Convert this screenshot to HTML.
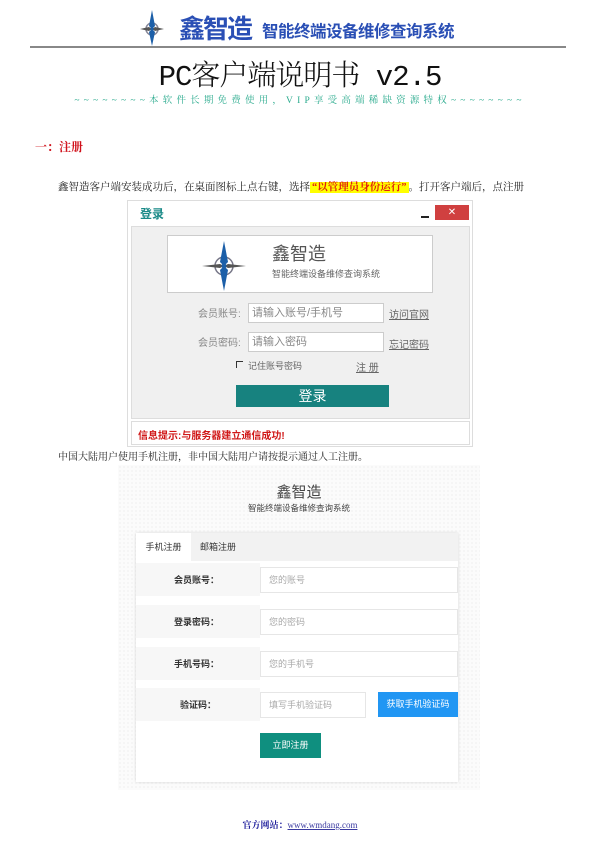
<!DOCTYPE html>
<html><head><meta charset="utf-8"><style>
*{margin:0;padding:0;box-sizing:border-box}
body{width:600px;height:850px;background:#fff;position:relative;overflow:hidden;font-family:"Liberation Serif","Noto Serif CJK SC",serif;color:#222}
.a{position:absolute;white-space:nowrap}
.s{font-family:"Liberation Sans","Noto Sans CJK SC",sans-serif}
.inp{position:absolute;background:#fff;border:1px solid #ccc;font-size:11px;color:#888;padding-left:3px;line-height:18px}
.rinp{position:absolute;background:#fff;border:1px solid #e6e6e6;font-size:9px;color:#aaa;padding-left:8px;line-height:24px}
.lab{position:absolute;font-size:9px;font-weight:bold;color:#333}
</style></head><body>
<svg class="a" style="left:140px;top:10px" width="24" height="36" viewBox="0 0 24 36">
<circle cx="12" cy="19" r="6" fill="none" stroke="#889" stroke-width="1.5"/>
<path d="M12 0 L15 16 L12 19 L9 16Z" fill="#1c5fa8"/><path d="M12 36 L15 22 L12 19 L9 22Z" fill="#1c5fa8"/>
<path d="M0 19 L9 17 L12 19 L9 21Z" fill="#555"/><path d="M24 19 L15 17 L12 19 L15 21Z" fill="#555"/>
<circle cx="12" cy="19" r="1.6" fill="#1c5fa8"/></svg>
<div class="a s" style="left:179px;top:13px;font-size:26px;font-weight:bold;color:#2a4fb5;letter-spacing:-2px;line-height:32px">鑫智造</div>
<div class="a s" style="left:262px;top:22px;font-size:16.5px;font-weight:bold;color:#2a4fb5;line-height:20px;letter-spacing:-0.5px">智能终端设备维修查询系统</div>
<div class="a" style="left:30px;top:46px;width:536px;height:2px;background:#888"></div>
<div class="a" style="left:0;width:600px;text-align:center;top:55px;font-size:29px;line-height:38px;color:#111;font-family:'Liberation Mono','Noto Serif CJK SC',serif;letter-spacing:-1px">PC<span style="font-family:'Noto Serif CJK SC',serif;font-weight:300">客户端说明书</span> v2.5</div>
<div class="a" style="left:0;width:600px;text-align:center;top:94px;font-size:9.5px;color:#2bab8e;letter-spacing:4.2px;line-height:14px">~~~~~~~~本软件长期免费使用，VIP享受高端稀缺资源特权~~~~~~~~</div>
<div class="a" style="left:35px;top:138px;font-size:12px;font-weight:bold;color:#d0101a">一：注册</div>
<div class="a" style="left:58px;top:181px;font-size:10.5px;line-height:14px">鑫智造客户端安装成功后，在桌面图标上点右键，选择<span style="background:#ffff00;color:#e02010;font-weight:bold;padding:0 2px">“以管理员身份运行”</span>。打开客户端后，点注册</div>

<!-- login window -->
<div class="a s" style="left:127px;top:200px;width:346px;height:247px;background:#fff;border:1px solid #ddd">
 <div class="a" style="left:12px;top:4px;font-size:12px;font-weight:bold;color:#1a8a88">登录</div>
 <div class="a" style="left:293px;top:15px;width:8px;height:2px;background:#222"></div>
 <div class="a" style="left:307px;top:4px;width:34px;height:15px;background:#d04040;color:#fff;font-size:10px;text-align:center;line-height:15px">✕</div>
 <div class="a" style="left:3px;top:25px;width:339px;height:193px;background:#f0f0f0;border:1px solid #ddd">
  <div class="a" style="left:35px;top:8px;width:266px;height:58px;background:#fff;border:1px solid #ccc">
   <svg class="a" style="left:34px;top:5px" width="44" height="50" viewBox="0 0 44 50"><circle cx="22" cy="25" r="9" fill="none" stroke="#778" stroke-width="1.5"/><path d="M22 0 L26 21 L22 25 L18 21Z" fill="#1c5fa8"/><path d="M22 50 L26 29 L22 25 L18 29Z" fill="#1c5fa8"/><path d="M0 25 L18 23 L22 25 L18 27Z" fill="#555"/><path d="M44 25 L26 23 L22 25 L26 27Z" fill="#555"/><circle cx="22" cy="25" r="2.5" fill="#1c5fa8"/></svg>
   <div class="a" style="left:104px;top:4px;font-size:18px;color:#555">鑫智造</div>
   <div class="a" style="left:104px;top:31px;font-size:9px;color:#666">智能终端设备维修查询系统</div>
  </div>
  <div class="a" style="left:66px;top:78px;font-size:10px;color:#888">会员账号:</div>
  <div class="inp" style="left:116px;top:76px;width:136px;height:20px">请输入账号/手机号</div>
  <div class="a" style="left:257px;top:79px;font-size:10px;color:#666;text-decoration:underline">访问官网</div>
  <div class="a" style="left:66px;top:107px;font-size:10px;color:#888">会员密码:</div>
  <div class="inp" style="left:116px;top:105px;width:136px;height:20px">请输入密码</div>
  <div class="a" style="left:257px;top:109px;font-size:10px;color:#666;text-decoration:underline">忘记密码</div>
  <div class="a" style="left:104px;top:134px;width:7px;height:7px;border-left:1px solid #333;border-top:1px solid #333"></div>
  <div class="a" style="left:116px;top:132px;font-size:9px;color:#666">记住账号密码</div>
  <div class="a" style="left:224px;top:132px;font-size:10px;color:#666;text-decoration:underline">注 册</div>
  <div class="a" style="left:104px;top:158px;width:153px;height:22px;background:#17827f;color:#fff;font-size:14px;text-align:center;line-height:22px">登录</div>
 </div>
 <div class="a" style="left:3px;top:220px;width:339px;height:24px;background:#fff;border:1px solid #ddd">
  <div class="a" style="left:6px;top:5px;font-size:10px;font-weight:bold;color:#d01818">信息提示:与服务器建立通信成功!</div>
 </div>
</div>

<div class="a" style="left:58px;top:451px;font-size:10px;line-height:14px">中国大陆用户使用手机注册，非中国大陆用户请按提示通过人工注册。</div>

<!-- register panel -->
<div class="a s" style="left:118px;top:465px;width:362px;height:325px;background-color:#fbfbfb;background-image:radial-gradient(#e6e6e6 0.6px,transparent 0.8px);background-size:4px 4px">
 <div class="a" style="left:0;width:362px;text-align:center;top:16px;font-size:15px;color:#444">鑫智造</div>
 <div class="a" style="left:0;width:362px;text-align:center;top:37px;font-size:8.5px;color:#444">智能终端设备维修查询系统</div>
 <div class="a" style="left:18px;top:68px;width:322px;height:249px;background:#fff;box-shadow:0 0 3px rgba(0,0,0,.15)">
  <div class="a" style="left:0;top:0;width:322px;height:28px;background:#f2f2f2"></div>
  <div class="a" style="left:0;top:0;width:55px;height:28px;background:#fff;font-size:9px;color:#333;text-align:center;line-height:28px">手机注册</div>
  <div class="a" style="left:64px;top:0;font-size:9px;color:#333;line-height:28px">邮箱注册</div>
  <div class="a" style="left:0;top:30px;width:124px;height:33px;background:#f7f7f7"></div>
  <div class="a" style="left:0;top:72px;width:124px;height:33px;background:#f7f7f7"></div>
  <div class="a" style="left:0;top:114px;width:124px;height:33px;background:#f7f7f7"></div>
  <div class="a" style="left:0;top:155px;width:124px;height:33px;background:#f7f7f7"></div>
  <div class="lab" style="left:38px;top:40px">会员账号：</div>
  <div class="rinp" style="left:124px;top:34px;width:198px;height:26px">您的账号</div>
  <div class="lab" style="left:38px;top:82px">登录密码：</div>
  <div class="rinp" style="left:124px;top:76px;width:198px;height:26px">您的密码</div>
  <div class="lab" style="left:38px;top:124px">手机号码：</div>
  <div class="rinp" style="left:124px;top:118px;width:198px;height:26px">您的手机号</div>
  <div class="lab" style="left:44px;top:165px">验证码：</div>
  <div class="rinp" style="left:124px;top:159px;width:106px;height:26px">填写手机验证码</div>
  <div class="a" style="left:242px;top:159px;width:80px;height:25px;background:#2196f3;color:#fff;font-size:9px;text-align:center;line-height:25px">获取手机验证码</div>
  <div class="a" style="left:124px;top:200px;width:61px;height:25px;background:#0f8f7f;color:#fff;font-size:9px;text-align:center;line-height:25px">立即注册</div>
 </div>
</div>

<div class="a" style="left:0;width:600px;text-align:center;top:818px;font-size:9px;line-height:14px"><b style="color:#1a1a9a">官方网站：</b><span style="color:#3a3aa0;text-decoration:underline">www.wmdang.com</span></div>
</body></html>
